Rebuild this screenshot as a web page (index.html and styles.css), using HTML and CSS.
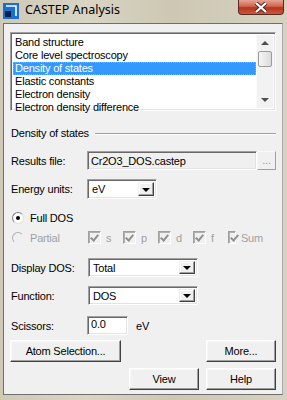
FILE: index.html
```html
<!DOCTYPE html>
<html lang="en">
<head>
  <meta charset="UTF-8" />
  <title>CASTEP Analysis</title>
  <link rel="stylesheet" href="styles.css">
</head>
<body>
  <div class="window">
    <div class="titlebar">
      <svg class="app-icon" width="16" height="16" viewBox="0 0 16 16">
        <rect x="0" y="0" width="16" height="16" fill="#1b6fd0" />
        <path d="M3 3H13V13" fill="none" stroke="#fff" stroke-width="1.6" />
        <rect x="2" y="8" width="6" height="6" fill="#0a1e4a" />
      </svg>
      <span class="title">CASTEP Analysis</span>
      <div class="close-btn">
        <svg width="14" height="11" viewBox="0 0 14 11">
          <path d="M2 1L12 10M12 1L2 10" stroke="#4a2a25" stroke-width="4" />
          <path d="M2 1L12 10M12 1L2 10" stroke="#fff" stroke-width="2.2" />
        </svg>
      </div>
    </div>

    <div class="client">
      <!-- analysis type list -->
      <div class="listbox">
        <div class="items">
          <div class="item">Band structure</div>
          <div class="item">Core level spectroscopy</div>
          <div class="item selected">Density of states</div>
          <div class="item">Elastic constants</div>
          <div class="item">Electron density</div>
          <div class="item">Electron density difference</div>
        </div>
        <div class="scrollbar">
          <span class="arrow up"></span>
          <span class="thumb"></span>
          <span class="track"></span>
          <span class="arrow down"></span>
        </div>
      </div>

      <div class="group-title">
        <span>Density of states</span>
        <span class="etched"></span>
      </div>

      <div class="row results-row">
        <span class="label">Results file:</span>
        <span class="field readonly file-field">Cr2O3_DOS.castep</span>
        <span class="button browse">...</span>
      </div>

      <div class="row energy-row">
        <span class="label">Energy units:</span>
        <span class="field combo small-combo">eV<span class="drop"></span></span>
      </div>

      <div class="radio-row full-row">
        <span class="radio checked"></span>
        <span>Full DOS</span>
      </div>

      <div class="radio-row partial-row disabled">
        <div class="partial-label">
          <span class="radio"></span>
          <span>Partial</span>
        </div>
        <div class="checks">
          <span class="check-item"><span class="check"></span>s</span>
          <span class="check-item"><span class="check"></span>p</span>
          <span class="check-item"><span class="check"></span>d</span>
          <span class="check-item"><span class="check"></span>f</span>
          <span class="check-item"><span class="check"></span>Sum</span>
        </div>
      </div>

      <div class="row display-row">
        <span class="label">Display DOS:</span>
        <span class="field combo wide-combo">Total<span class="drop"></span></span>
      </div>

      <div class="row function-row">
        <span class="label">Function:</span>
        <span class="field combo wide-combo">DOS<span class="drop"></span></span>
      </div>

      <div class="row scissors-row">
        <span class="label">Scissors:</span>
        <span class="field scissors-field">0.0</span>
        <span class="unit">eV</span>
      </div>

      <div class="button-row">
        <span class="button atom-btn">Atom Selection...</span>
        <span class="button std-btn">More...</span>
      </div>

      <div class="button-row end">
        <span class="button std-btn">View</span>
        <span class="button std-btn">Help</span>
      </div>
    </div>
  </div>
</body>
</html>
```

FILE: styles.css
```css
body {
  margin: 0;
  width: 287px;
  height: 400px;
  overflow: hidden;
  background: #d3cebd;
  font-family: 'Liberation Sans', Arial, sans-serif;
  font-size: 11px;
  letter-spacing: -0.2px;
  color: #000;
}

.window {
  height: 400px;
  display: flex;
  flex-direction: column;
  background: linear-gradient(to right, #cfc9b6, #d9d4c4 30%, #cdc7b3 60%, #d6d1c1);
}

/* title bar */
.titlebar {
  height: 23px;
  display: flex;
  align-items: flex-start;
  position: relative;
}

.app-icon {
  margin: 3px 0 0 3px;
}

.title {
  margin: 2px 0 0 6px;
  font-family: 'Noto Sans', 'Open Sans', sans-serif;
  font-size: 12.5px;
  letter-spacing: 0;
  line-height: 16px;
  color: #000;
}

.close-btn {
  position: absolute;
  top: 0;
  left: 238px;
  width: 46px;
  height: 15px;
  box-sizing: border-box;
  border: 1px solid #5a2a22;
  border-top: none;
  border-radius: 0 0 4px 4px;
  background: linear-gradient(to bottom, #e6a493, #d06450 45%, #b8321c 55%, #c75a3e);
  display: flex;
  justify-content: center;
  align-items: center;
}

/* client area */
.client {
  margin: 0 4px 0 3px;
  height: 372px;
  box-sizing: border-box;
  border: 1px solid #6f6f6f;
  border-right-color: #a8a8a8;
  background: #f0f0f0;
  padding: 8px 6px 0 6px;
  display: flex;
  flex-direction: column;
}

/* sunken 3D edge */
.listbox,
.field {
  box-sizing: border-box;
  border: 1px solid;
  border-color: #a0a0a0 #fff #fff #a0a0a0;
  box-shadow: inset 1px 1px #696969, inset -1px -1px #e3e3e3;
  background: #fff;
}

.listbox {
  height: 79px;
  width: 266px;
  display: flex;
  padding: 2px;
}

.items {
  flex: 1;
  padding-top: 1px;
}

.item {
  height: 13px;
  line-height: 13px;
  padding-left: 2px;
  white-space: nowrap;
}

.item.selected {
  background: #3399ff;
  color: #fff;
  outline: 1px dotted #e0a050;
  outline-offset: -1px;
}

.scrollbar {
  width: 16px;
  display: flex;
  flex-direction: column;
  align-items: center;
  background: #f2f2f2;
  border-left: 1px solid #fafafa;
}

.arrow {
  width: 16px;
  height: 16px;
  position: relative;
}

.arrow::after {
  content: "";
  position: absolute;
  left: 4px;
  border-left: 4px solid transparent;
  border-right: 4px solid transparent;
}

.arrow.up::after {
  top: 6px;
  border-bottom: 4px solid #505050;
}

.arrow.down::after {
  top: 6px;
  border-top: 4px solid #505050;
}

.thumb {
  width: 14px;
  height: 16px;
  box-sizing: border-box;
  border: 1px solid #9a9a9a;
  border-radius: 2px;
  background: linear-gradient(to right, #f5f5f5, #dcdcdc);
}

.track {
  flex: 1;
}

/* group title */
.group-title {
  margin-top: 15px;
  height: 14px;
  display: flex;
  align-items: center;
  padding-left: 1px;
}

.etched {
  flex: 1;
  height: 0;
  margin: 1px 0 0 6px;
  border-top: 1px solid #a0a0a0;
  border-bottom: 1px solid #fff;
}

/* form rows */
.row {
  display: flex;
  align-items: center;
  height: 19px;
  padding-left: 1px;
}

.label {
  width: 76px;
}

.results-row { margin-top: 11px; }
.energy-row { margin-top: 9px; height: 20px; }
.display-row { margin-top: 14px; }
.function-row { margin-top: 9px; }
.scissors-row { margin-top: 11px; }

.field {
  height: 100%;
  display: flex;
  align-items: center;
  padding-left: 3px;
  position: relative;
}

.field.readonly {
  background: #f0f0f0;
}

.file-field {
  width: 170px;
}

.combo {
  padding-left: 4px;
}

.small-combo { width: 70px; }
.wide-combo { width: 110px; margin-left: 1px; }
.scissors-field { width: 41px; align-items: flex-start; padding-top: 1px; }

.unit {
  margin-left: 8px;
}

.drop {
  position: absolute;
  right: 2px;
  top: 2px;
  bottom: 2px;
  width: 16px;
  box-sizing: border-box;
  border: 1px solid;
  border-color: #f0f0f0 #404040 #404040 #f0f0f0;
  box-shadow: inset -1px -1px #a0a0a0, inset 1px 1px #fff;
  background: #f0f0f0;
  display: flex;
  align-items: center;
  justify-content: center;
}

.drop::after {
  content: "";
  margin-top: 1px;
  border-left: 4px solid transparent;
  border-right: 4px solid transparent;
  border-top: 4px solid #000;
}

/* raised buttons */
.button {
  box-sizing: border-box;
  border: 1px solid;
  border-color: #fff #404040 #404040 #fff;
  box-shadow: inset -1px -1px #a0a0a0, inset 1px 1px #f8f8f8;
  background: #f0f0f0;
  display: flex;
  align-items: center;
  justify-content: center;
}

.browse {
  width: 19px;
  height: 100%;
  color: #9a9a9a;
  padding-bottom: 2px;
  border-color: #f8f8f8 #a0a0a0 #a0a0a0 #f8f8f8;
  box-shadow: none;
}

.button-row {
  display: flex;
  justify-content: space-between;
  margin-top: 5px;
  height: 22px;
}

.button-row.end {
  justify-content: flex-end;
  gap: 7px;
  margin-top: 6px;
}

.atom-btn { width: 111px; }
.std-btn { width: 70px; }

/* radios and checks */
.radio-row {
  display: flex;
  align-items: center;
  height: 13px;
  padding-left: 2px;
}

.full-row { margin-top: 12px; }
.partial-row { margin-top: 7px; }

.partial-label {
  display: flex;
  align-items: center;
  width: 76px;
}

.radio {
  width: 12px;
  height: 12px;
  box-sizing: border-box;
  border-radius: 50%;
  border: 1px solid #808080;
  border-right-color: #e0e0e0;
  border-bottom-color: #e0e0e0;
  background: #fff;
  margin-right: 6px;
  position: relative;
}

.radio.checked::after {
  content: "";
  position: absolute;
  left: 3px;
  top: 3px;
  width: 4px;
  height: 4px;
  border-radius: 50%;
  background: #000;
}

.disabled {
  color: #a0a0a0;
}

.disabled .radio {
  background: #f0f0f0;
  border-color: #b0b0b0 #f0f0f0 #f0f0f0 #b0b0b0;
}

.checks {
  display: flex;
}

.check-item {
  width: 35px;
  display: flex;
  align-items: center;
}

.check {
  width: 13px;
  height: 13px;
  box-sizing: border-box;
  border: 1px solid;
  border-color: #a0a0a0 #fff #fff #a0a0a0;
  box-shadow: inset 1px 1px #b0b0b0;
  background: #f0f0f0;
  margin-right: 5px;
  position: relative;
}

.check::after {
  content: "";
  position: absolute;
  left: 3px;
  top: 1px;
  width: 3px;
  height: 6px;
  border: solid #909090;
  border-width: 0 2px 2px 0;
  transform: rotate(40deg);
}
```
